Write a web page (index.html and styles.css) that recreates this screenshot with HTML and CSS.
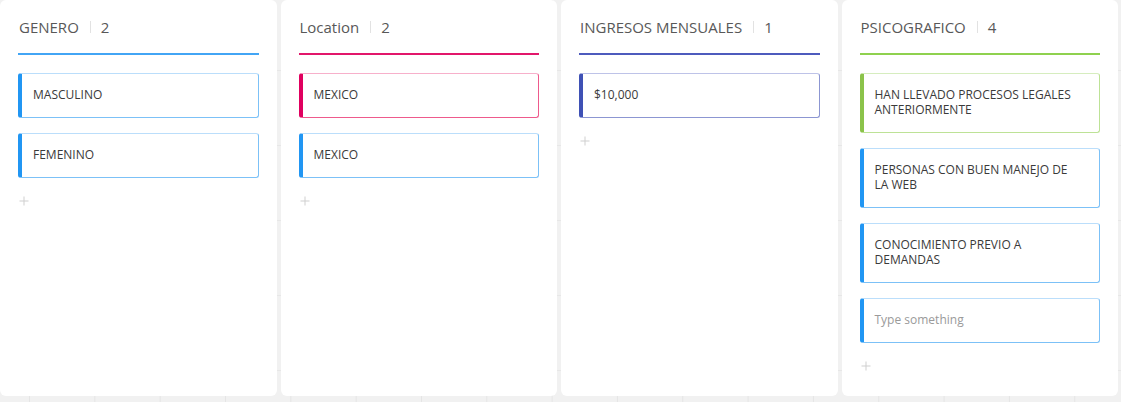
FILE: index.html
```html
<!DOCTYPE html>
<html lang="es">
<head>
<meta charset="utf-8">
<title>Board</title>
<link rel="stylesheet" href="styles.css">
</head>
<body>
<div class="board">
  <section class="column col-blue">
    <header class="col-head"><span class="col-title">GENERO</span><span class="sep"></span><span class="count">2</span></header>
    <div class="card card-blue">MASCULINO</div>
    <div class="card card-blue">FEMENINO</div>
    <div class="add"><svg width="10" height="10" viewBox="0 0 10 10"><path d="M5 0.5v9M0.5 5h9" stroke="#cfcfcf" stroke-width="1"/></svg></div>
  </section>
  <section class="column col-pink">
    <header class="col-head"><span class="col-title">Location</span><span class="sep"></span><span class="count">2</span></header>
    <div class="card card-pink">MEXICO</div>
    <div class="card card-blue">MEXICO</div>
    <div class="add"><svg width="10" height="10" viewBox="0 0 10 10"><path d="M5 0.5v9M0.5 5h9" stroke="#cfcfcf" stroke-width="1"/></svg></div>
  </section>
  <section class="column col-indigo">
    <header class="col-head"><span class="col-title">INGRESOS MENSUALES</span><span class="sep"></span><span class="count">1</span></header>
    <div class="card card-indigo">$10,000</div>
    <div class="add"><svg width="10" height="10" viewBox="0 0 10 10"><path d="M5 0.5v9M0.5 5h9" stroke="#cfcfcf" stroke-width="1"/></svg></div>
  </section>
  <section class="column col-green">
    <header class="col-head"><span class="col-title">PSICOGRAFICO</span><span class="sep"></span><span class="count">4</span></header>
    <div class="card card-green">HAN LLEVADO PROCESOS LEGALES ANTERIORMENTE</div>
    <div class="card card-blue">PERSONAS CON BUEN MANEJO DE LA WEB</div>
    <div class="card card-blue">CONOCIMIENTO PREVIO A DEMANDAS</div>
    <div class="card card-blue placeholder">Type something</div>
    <div class="add"><svg width="10" height="10" viewBox="0 0 10 10"><path d="M5 0.5v9M0.5 5h9" stroke="#cfcfcf" stroke-width="1"/></svg></div>
  </section>
</div>
</body>
</html>
```
FILE: styles.css
```css
html, body {
  margin: 0;
  padding: 0;
}
body {
  width: 1121px;
  height: 402px;
  overflow: hidden;
  background-color: #f1f1f1;
  background-image:
    linear-gradient(to right, #e5e5e5 1px, transparent 1px),
    linear-gradient(to bottom, #e7e7e7 1px, transparent 1px);
  background-size: 65.33px 75px;
  background-position: 29px 70px;
  font-family: "Open Sans", "Noto Sans", Arial, sans-serif;
  color: #333;
}
.board {
  display: grid;
  grid-template-columns: repeat(4, 1fr);
  column-gap: 4px;
  padding-right: 3px;
  height: 396px;
}
.column {
  background: #fff;
  border-radius: 6px;
  padding: 0 18px;
  display: flex;
  flex-direction: column;
  gap: 15px;
}
.col-head {
  height: 53px;
  display: flex;
  align-items: center;
  font-size: 15px;
  color: #585858;
  border-bottom: 2px solid #42a5f5;
  padding-left: 1px;
  margin-bottom: 3px;
}
.col-pink .col-head { border-bottom-color: #e2176b; }
.col-indigo .col-head { border-bottom-color: #4e5bbd; }
.col-green .col-head { border-bottom-color: #8fd14f; }
.sep {
  width: 1px;
  height: 12px;
  background: #e2e2e2;
  margin: 0 10px 0 11px;
}
.card {
  border: 1px solid #90caf9;
  border-left: 4px solid #2196f3;
  border-radius: 3px;
  padding: 13px 22px 15px 11px;
  font-size: 12px;
  line-height: 15px;
  color: #3a3a3a;
}
.card-blue {
  border-color: #bbdefb #7cc1f7 #7cc1f7 #2196f3;
}
.card-pink {
  border-color: #f7b0cb #ee5a8c #ee5a8c #e0005f;
}
.card-indigo {
  border-color: #bec3e8 #8c96d2 #8c96d2 #3f51b5;
}
.card-green {
  border-color: #d6edbf #bde296 #bde296 #8bc34a;
}
.placeholder {
  color: #9a9a9a;
}
.add {
  margin-top: 3px;
  padding-left: 1px;
  height: 10px;
  line-height: 0;
}
```
